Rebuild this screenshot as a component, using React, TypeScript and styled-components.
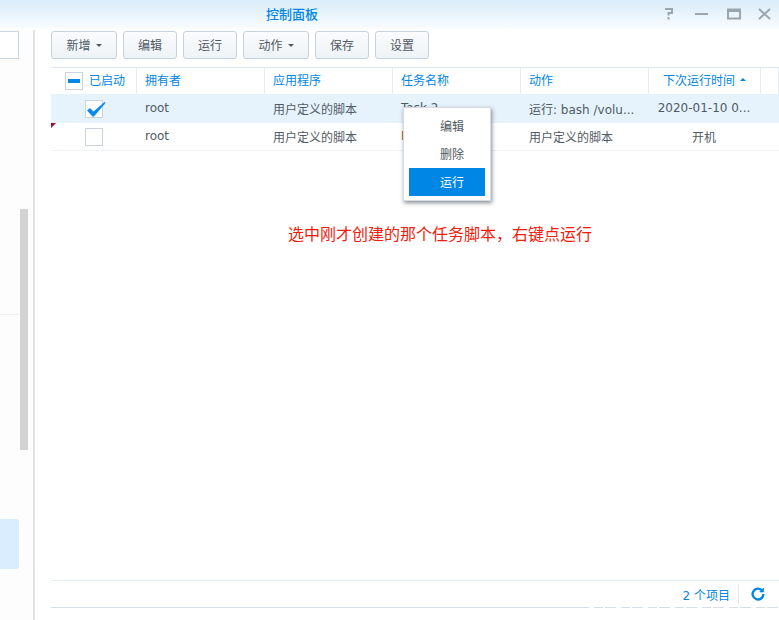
import styled, { createGlobalStyle } from 'styled-components';

const GlobalStyle = createGlobalStyle`
	html, body {
		margin: 0;
		padding: 0;
		background: #fff;
	}
	body {
		font-family: "DejaVu Sans", "Noto Sans CJK SC", sans-serif;
		font-size: 12px;
		color: #505a64;
	}
`;

const columns = '86px 128px 128px 128px 128px 112px 18px';

const Window = styled.div`
	position: relative;
	width: 779px;
	height: 620px;
	overflow: hidden;
	display: flex;
	flex-direction: column;
`;

const TitleBar = styled.header`
	position: relative;
	height: 30px;
	flex: none;
	display: flex;
	align-items: center;
	justify-content: center;
	padding-right: 195px;
	background: linear-gradient(#d9ecf9, #f7fbfe 90%, #fff);
`;

const Title = styled.h1`
	margin: 0 0 4px;
	font-size: 13px;
	font-weight: 500;
	color: #0086e5;
`;

const WindowControls = styled.div`
	position: absolute;
	right: 1px;
	top: 5px;
	display: flex;
	gap: 8px;
`;

const ControlIcon = styled.svg`
	width: 24px;
	height: 18px;
	fill: none;
	stroke: #9aa5ae;
	stroke-width: 2;
`;

const Body = styled.div`
	flex: 1;
	display: flex;
`;

const Sidebar = styled.aside`
	width: 33px;
	flex: none;
	display: flex;
	flex-direction: column;
	border-right: 2px solid #e4e4e4;
	background: #fdfdfd;
`;

const SearchBox = styled.div`
	width: 19px;
	height: 28px;
	margin-top: 1px;
	box-sizing: border-box;
	background: #fff;
	border: 1px solid #c9d6e2;
	border-left: none;
`;

const SidebarBody = styled.div`
	flex: 1;
	display: flex;
	gap: 1px;
`;

const SideList = styled.div`
	width: 19px;
	display: flex;
	flex-direction: column;
`;

const SideRule = styled.div`
	height: 1px;
	margin-top: 255px;
	background: #eceff2;
`;

const SideSelected = styled.div`
	height: 50px;
	margin-top: 204px;
	background: #d9edfe;
	border-radius: 0 3px 3px 0;
`;

const ScrollThumb = styled.div`
	width: 8px;
	height: 241px;
	margin-top: 150px;
	background: #d3d3d3;
`;

const Main = styled.main`
	flex: 1;
	display: flex;
	flex-direction: column;
	padding-left: 16px;
	min-width: 0;
`;

const Toolbar = styled.div`
	display: flex;
	gap: 6px;
	margin-top: 1px;
	height: 28px;
`;

const ToolButton = styled.button<{ $wide?: boolean }>`
	height: 28px;
	width: ${(p) => (p.$wide ? 66 : 54)}px;
	padding: 0 0 2px;
	display: flex;
	align-items: center;
	justify-content: center;
	gap: 5px;
	box-sizing: border-box;
	border: 1px solid #c6d3df;
	border-radius: 3px;
	background: linear-gradient(#fafcfd, #eef3f7);
	font: inherit;
	color: #505a64;
`;

const Caret = styled.span`
	width: 0;
	height: 0;
	margin-top: 2px;
	border-left: 3px solid transparent;
	border-right: 3px solid transparent;
	border-top: 3px solid #505a64;
`;

const Table = styled.div`
	margin-top: 8px;
	flex: 1;
	display: flex;
	flex-direction: column;
`;

const HeaderRow = styled.div`
	display: grid;
	grid-template-columns: ${columns};
	height: 26px;
	border-top: 1px solid #dfe5ec;
	color: #0086e5;
`;

const HeaderCell = styled.div<{ $center?: boolean }>`
	display: flex;
	align-items: center;
	justify-content: ${(p) => (p.$center ? 'center' : 'flex-start')};
	gap: 5px;
	padding-left: ${(p) => (p.$center ? 0 : 8)}px;
	padding-bottom: 3px;
	box-sizing: border-box;
	border-right: 1px solid #e5ebf1;
	white-space: nowrap;
`;

const EnabledHeader = styled(HeaderCell)`
	padding-left: 14px;
	padding-bottom: 0;
	gap: 6px;
`;

const HeaderLabel = styled.span`
	margin-bottom: 3px;
`;

const SortMark = styled.span`
	width: 0;
	height: 0;
	border-left: 3px solid transparent;
	border-right: 3px solid transparent;
	border-bottom: 3px solid #0086e5;
`;

const Row = styled.div<{ $selected?: boolean }>`
	position: relative;
	display: grid;
	grid-template-columns: ${columns};
	height: ${(p) => (p.$selected ? 29 : 27)}px;
	border-bottom: ${(p) => (p.$selected ? 'none' : '1px solid #eef1f5')};
	background: ${(p) => (p.$selected ? '#e6f3fd' : '#fff')};
`;

const Cell = styled.div<{ $center?: boolean }>`
	display: flex;
	align-items: center;
	justify-content: ${(p) => (p.$center ? 'center' : 'flex-start')};
	padding-left: ${(p) => (p.$center ? 0 : 8)}px;
	padding-right: ${(p) => (p.$center ? 2 : 0)}px;
	padding-bottom: 1px;
	white-space: nowrap;
	overflow: hidden;
`;

const CheckCell = styled(Cell)`
	padding-left: 34px;
	padding-bottom: 0;
	overflow: visible;
`;

const Box = styled.span`
	position: relative;
	display: block;
	width: 18px;
	height: 18px;
	box-sizing: border-box;
	border: 1px solid #c9d3dd;
	background: #fff;
`;

const HeadBox = styled(Box)`
	flex: none;
	display: flex;
	align-items: center;
	justify-content: center;
	&::after {
		content: '';
		width: 12px;
		height: 4px;
		background: #0086e5;
	}
`;

const CheckMark = styled.svg`
	position: absolute;
	left: -1px;
	top: -1px;
	width: 21px;
	height: 18px;
	fill: #0b8ce9;
`;

const RedCorner = styled.span`
	position: absolute;
	left: 0;
	top: 0;
	width: 0;
	height: 0;
	border-top: 5px solid #a80a1e;
	border-right: 5px solid transparent;
`;

const Hidden = styled.span`
	color: #b8442c;
`;

const Footer = styled.div`
	position: relative;
	height: 26px;
	flex: none;
	margin-bottom: 12px;
	display: flex;
	align-items: center;
	justify-content: flex-end;
	border-top: 1px solid #e6edf3;
	border-bottom: 1px solid #d5dfe8;
	color: #0086e5;
	&::after {
		content: '';
		position: absolute;
		left: 538px;
		right: 0;
		bottom: -1px;
		height: 1px;
		background: repeating-linear-gradient(90deg, #fff 0 5px, transparent 5px 14px, #fff 14px 16px, transparent 16px 27px);
	}
`;

const Count = styled.span`
	padding-right: 8px;
`;

const FooterDivider = styled.span`
	width: 1px;
	height: 20px;
	background: #dfe6ed;
	margin-right: 12px;
`;

const RefreshIcon = styled.svg`
	width: 14px;
	height: 14px;
	margin-right: 14px;
	fill: none;
	stroke: #0086e5;
	stroke-width: 2.4;
`;

const Menu = styled.ul`
	position: absolute;
	left: 403px;
	top: 107px;
	width: 88px;
	height: 94px;
	box-sizing: border-box;
	margin: 0;
	padding: 4px 5px;
	list-style: none;
	background: #fff;
	border: 1px solid #d5dbe0;
	box-shadow: 1px 2px 4px rgba(40, 50, 60, 0.55);
`;

const MenuItem = styled.li<{ $active?: boolean }>`
	height: 28px;
	box-sizing: border-box;
	display: flex;
	align-items: center;
	padding: 0 0 2px 31px;
	background: ${(p) => (p.$active ? '#0086e5' : 'transparent')};
	color: ${(p) => (p.$active ? '#fff' : '#505a64')};
`;

const Note = styled.div`
	position: absolute;
	left: 288px;
	top: 226px;
	font-size: 16px;
	line-height: 18px;
	color: #f01c0c;
	white-space: nowrap;
`;

const App = () => {
	return (
		<Window>
			<GlobalStyle />
			<TitleBar>
				<Title>控制面板</Title>
				<WindowControls>
					<ControlIcon viewBox="0 0 24 18">
						<path d="M7 4h7v4h-3.5v2.5M10.5 12v2.5" />
					</ControlIcon>
					<ControlIcon viewBox="0 0 24 18">
						<path d="M5 9h13" />
					</ControlIcon>
					<ControlIcon viewBox="0 0 24 18">
						<path d="M6 4.5h12v9H6zM6 6h12" />
					</ControlIcon>
					<ControlIcon viewBox="0 0 24 18">
						<path d="M5 4l11 10M16 4L5 14" />
					</ControlIcon>
				</WindowControls>
			</TitleBar>
			<Body>
				<Sidebar>
					<SearchBox />
					<SidebarBody>
						<SideList>
							<SideRule />
							<SideSelected />
						</SideList>
						<ScrollThumb />
					</SidebarBody>
				</Sidebar>
				<Main>
					<Toolbar>
						<ToolButton $wide>新增<Caret /></ToolButton>
						<ToolButton>编辑</ToolButton>
						<ToolButton>运行</ToolButton>
						<ToolButton $wide>动作<Caret /></ToolButton>
						<ToolButton>保存</ToolButton>
						<ToolButton>设置</ToolButton>
					</Toolbar>
					<Table>
						<HeaderRow>
							<EnabledHeader><HeadBox /><HeaderLabel>已启动</HeaderLabel></EnabledHeader>
							<HeaderCell>拥有者</HeaderCell>
							<HeaderCell>应用程序</HeaderCell>
							<HeaderCell>任务名称</HeaderCell>
							<HeaderCell>动作</HeaderCell>
							<HeaderCell $center>下次运行时间<SortMark /></HeaderCell>
							<HeaderCell />
						</HeaderRow>
						<Row $selected>
							<CheckCell>
								<Box>
									<CheckMark viewBox="0 0 21 18">
										<path d="M2 10.5L5 8l3.5 3.5L19.5 2l1 1L9 16.5H7.5z" />
									</CheckMark>
								</Box>
							</CheckCell>
							<Cell>root</Cell>
							<Cell>用户定义的脚本</Cell>
							<Cell>Task 2</Cell>
							<Cell>运行: bash /volu...</Cell>
							<Cell $center>2020-01-10 0...</Cell>
							<Cell />
						</Row>
						<Row>
							<RedCorner />
							<CheckCell><Box /></CheckCell>
							<Cell>root</Cell>
							<Cell>用户定义的脚本</Cell>
							<Cell><Hidden>Reset</Hidden></Cell>
							<Cell>用户定义的脚本</Cell>
							<Cell $center>开机</Cell>
							<Cell />
						</Row>
					</Table>
					<Footer>
						<Count>2 个项目</Count>
						<FooterDivider />
						<RefreshIcon viewBox="0 0 14 14">
							<path d="M11.6 4.2A5.4 5.4 0 1 0 12.4 7" />
							<path d="M12.6 1v4h-4z" fill="#0086e5" strokeWidth="0.6" />
						</RefreshIcon>
					</Footer>
				</Main>
			</Body>
			<Menu>
				<MenuItem>编辑</MenuItem>
				<MenuItem>删除</MenuItem>
				<MenuItem $active>运行</MenuItem>
			</Menu>
			<Note>选中刚才创建的那个任务脚本，右键点运行</Note>
		</Window>
	);
};

export default App;
